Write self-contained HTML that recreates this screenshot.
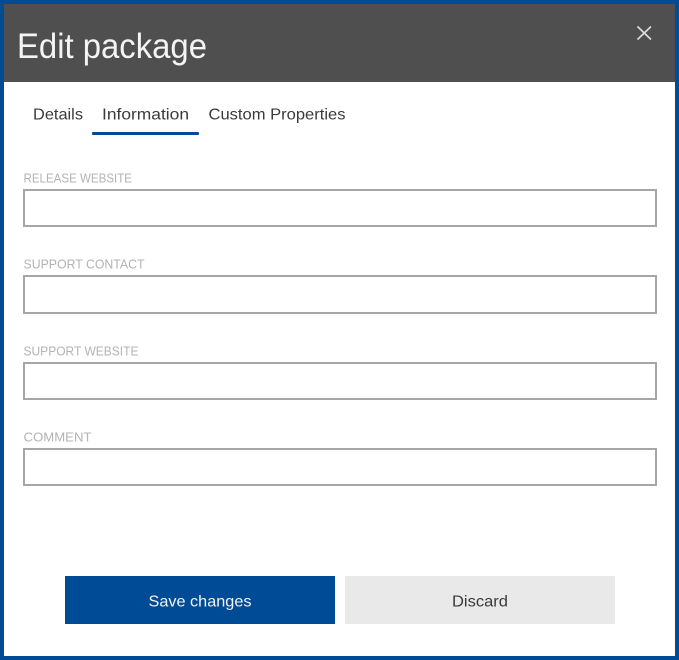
<!DOCTYPE html>
<html><head><meta charset="utf-8"><style>
html,body{margin:0;padding:0;width:679px;height:660px;overflow:hidden;background:#fff}
svg{display:block}
text{font-family:"Liberation Sans",sans-serif}
</style></head><body>
<svg width="679" height="660" viewBox="0 0 679 660" xmlns="http://www.w3.org/2000/svg">
<rect width="679" height="660" fill="#004b96"/>
<rect x="4" y="4" width="671" height="652" fill="#fff"/>
<rect x="4" y="4" width="671" height="78" fill="#4f4f4f"/>
<text x="17" y="58" font-size="35" fill="#f4f4f4" textLength="190" lengthAdjust="spacingAndGlyphs">Edit package</text>
<path d="M637.500 26.500L651 39.500M651 26.500L637.500 39.500" stroke="#dcdcdc" stroke-width="1.700" fill="none"/>
<text x="33" y="119.500" font-size="16" fill="#3a3a3a" textLength="50" lengthAdjust="spacingAndGlyphs">Details</text>
<text x="102" y="119.500" font-size="16" fill="#3a3a3a" textLength="87" lengthAdjust="spacingAndGlyphs">Information</text>
<text x="208.500" y="119.500" font-size="16" fill="#3a3a3a" textLength="137" lengthAdjust="spacingAndGlyphs">Custom Properties</text>
<rect x="92" y="132" width="107" height="3" rx="1" fill="#004b96"/>
<text x="23.500" y="182.500" font-size="13" fill="#b3b3b3" textLength="108.500" lengthAdjust="spacingAndGlyphs">RELEASE WEBSITE</text>
<rect x="24" y="190" width="632" height="36" fill="#fff" stroke="#a6a6a6" stroke-width="2"/>
<text x="23.500" y="268.500" font-size="13" fill="#b3b3b3" textLength="121" lengthAdjust="spacingAndGlyphs">SUPPORT CONTACT</text>
<rect x="24" y="276" width="632" height="37" fill="#fff" stroke="#a6a6a6" stroke-width="2"/>
<text x="23.500" y="355.500" font-size="13" fill="#b3b3b3" textLength="115" lengthAdjust="spacingAndGlyphs">SUPPORT WEBSITE</text>
<rect x="24" y="363" width="632" height="36" fill="#fff" stroke="#a6a6a6" stroke-width="2"/>
<text x="23.500" y="441.500" font-size="13" fill="#b3b3b3" textLength="68" lengthAdjust="spacingAndGlyphs">COMMENT</text>
<rect x="24" y="449" width="632" height="36" fill="#fff" stroke="#a6a6a6" stroke-width="2"/>
<rect x="65" y="576" width="270" height="48" fill="#004b96"/>
<text x="148.500" y="606.500" font-size="16" fill="#f4f4f4" textLength="103" lengthAdjust="spacingAndGlyphs">Save changes</text>
<rect x="345" y="576" width="270" height="48" fill="#e9e9e9"/>
<text x="452" y="606.500" font-size="16" fill="#3a3a3a" textLength="56" lengthAdjust="spacingAndGlyphs">Discard</text>
</svg>
</body></html>
